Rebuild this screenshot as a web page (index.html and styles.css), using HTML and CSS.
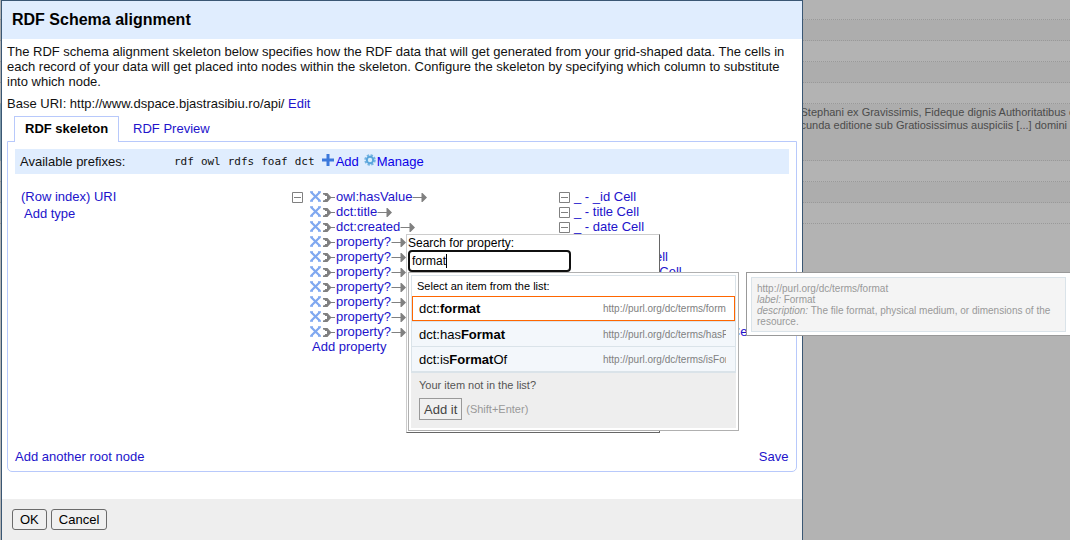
FILE: index.html
```html
<!DOCTYPE html>
<html lang="en">
<head>
<meta charset="utf-8">
<title>RDF Schema alignment</title>
<link rel="stylesheet" href="styles.css">
</head>
<body>
<svg class="sprite" aria-hidden="true">
  <symbol id="cross" viewBox="0 0 11 11"><path d="M1.2 1.2L9.8 9.8M9.8 1.2L1.2 9.8" stroke="#7fa8f0" stroke-width="2.2" fill="none"/><path d="M0 1h3M8 1H11M0 10h3M8 10H11" stroke="#7fa8f0" stroke-width="1.500"/></symbol>
  <symbol id="tail" viewBox="0 0 12 11"><path d="M0 1h4.500l3.500 4H12v1H8L4.500 10H0V8.500L2 8V7h2V4H2V3L0 2.500z" fill="#808080"/></symbol>
  <symbol id="head" viewBox="0 0 14 11"><path d="M0 5h9V1h1l4.500 4.500L10 10H9V6H0z" fill="#808080"/></symbol>
  <symbol id="minus" viewBox="0 0 11 11"><path d="M.5.5h10v10H.5zM2 5.500h7" fill="none" stroke="#808080"/></symbol>
</svg>

<div class="grid-view">
  <div class="record"></div><div class="record"></div><div class="record"></div><div class="record"></div><div class="record"></div>
  <div class="record record-tall">Stephani ex Gravissimis, Fideque dignis Authoritatibus collecta<br>cunda editione sub Gratiosissimus auspiciis [...] domini comitis</div>
  <div class="record"></div><div class="record"></div><div class="record"></div>
</div>

<div class="dialog" role="dialog" aria-labelledby="dialog-title">
  <h1 class="dialog-header" id="dialog-title">RDF Schema alignment</h1>
  <div class="dialog-body">
    <p class="intro">The RDF schema alignment skeleton below specifies how the RDF data that will get generated from your grid-shaped data. The cells in each record of your data will get placed into nodes within the skeleton. Configure the skeleton by specifying which column to substitute into which node.</p>
    <p class="base-uri">Base URI: http://www.dspace.bjastrasibiu.ro/api/ <a href="#">Edit</a></p>
    <nav class="tabs">
      <a class="tab tab-active" href="#">RDF skeleton</a>
      <a class="tab" href="#">RDF Preview</a>
    </nav>
    <section class="panel">
      <div class="prefixes">
        <span class="prefixes-label">Available prefixes:</span>
        <span class="prefix-list"><span>rdf</span><span>owl</span><span>rdfs</span><span>foaf</span><span>dct</span></span>
        <a class="action" href="#"><svg width="12" height="12" viewBox="0 0 12 12"><path d="M4.500 0h3v4.500H12v3H7.500V12h-3V7.500H0v-3h4.500z" fill="#3b78dc"/></svg>Add</a>
        <a class="action" href="#"><svg width="12" height="12" viewBox="0 0 12 12"><circle cx="6" cy="6" r="4.800" fill="none" stroke="#74b4e2" stroke-width="2" stroke-dasharray="2.300 1.470"/><circle cx="6" cy="6" r="3.200" fill="#d5edfb" stroke="#5aa5dc" stroke-width="2"/></svg>Manage</a>
      </div>
      <div class="skeleton">
        <div class="root-node"><a href="#">(Row index) URI</a><a class="add-type" href="#">Add type</a></div>
        <div class="properties">
          <svg class="toggle"><use href="#minus"/></svg>
          <div class="rows">
            <div class="row"><svg class="cross"><use href="#cross"/></svg><svg class="tail"><use href="#tail"/></svg><a href="#">owl:hasValue</a><svg class="head"><use href="#head"/></svg></div>
            <div class="row"><svg class="cross"><use href="#cross"/></svg><svg class="tail"><use href="#tail"/></svg><a href="#">dct:title</a><svg class="head"><use href="#head"/></svg></div>
            <div class="row"><svg class="cross"><use href="#cross"/></svg><svg class="tail"><use href="#tail"/></svg><a href="#">dct:created</a><svg class="head"><use href="#head"/></svg></div>
            <div class="row"><svg class="cross"><use href="#cross"/></svg><svg class="tail"><use href="#tail"/></svg><a href="#">property?</a><svg class="head"><use href="#head"/></svg></div>
            <div class="row"><svg class="cross"><use href="#cross"/></svg><svg class="tail"><use href="#tail"/></svg><a href="#">property?</a><svg class="head"><use href="#head"/></svg></div>
            <div class="row"><svg class="cross"><use href="#cross"/></svg><svg class="tail"><use href="#tail"/></svg><a href="#">property?</a><svg class="head"><use href="#head"/></svg></div>
            <div class="row"><svg class="cross"><use href="#cross"/></svg><svg class="tail"><use href="#tail"/></svg><a href="#">property?</a><svg class="head"><use href="#head"/></svg></div>
            <div class="row"><svg class="cross"><use href="#cross"/></svg><svg class="tail"><use href="#tail"/></svg><a href="#">property?</a><svg class="head"><use href="#head"/></svg></div>
            <div class="row"><svg class="cross"><use href="#cross"/></svg><svg class="tail"><use href="#tail"/></svg><a href="#">property?</a><svg class="head"><use href="#head"/></svg></div>
            <div class="row"><svg class="cross"><use href="#cross"/></svg><svg class="tail"><use href="#tail"/></svg><a href="#">property?</a><svg class="head"><use href="#head"/></svg></div>
            <div class="row add-property"><a href="#">Add property</a></div>
          </div>
        </div>
        <div class="cells">
          <div class="row"><svg class="toggle"><use href="#minus"/></svg><a href="#">_ - _id Cell</a></div>
          <div class="row"><svg class="toggle"><use href="#minus"/></svg><a href="#">_ - title Cell</a></div>
          <div class="row"><svg class="toggle"><use href="#minus"/></svg><a href="#">_ - date Cell</a></div>
          <div class="row"><svg class="toggle"><use href="#minus"/></svg><a href="#">_ - type Cell</a></div>
          <div class="row"><svg class="toggle"><use href="#minus"/></svg><a href="#">_ - identifier Cell</a></div>
          <div class="row"><svg class="toggle"><use href="#minus"/></svg><a href="#">_ - description Cell</a></div>
          <div class="row"><svg class="toggle"><use href="#minus"/></svg><a href="#">_ - format Cell</a></div>
          <div class="row"><svg class="toggle"><use href="#minus"/></svg><a href="#">_ - subject Cell</a></div>
          <div class="row"><svg class="toggle"><use href="#minus"/></svg><a href="#">_ - publisher Cell</a></div>
          <div class="row"><svg class="toggle"><use href="#minus"/></svg><a href="#">_ - bibliographicCitation_id Cell</a></div>
        </div>
      </div>
      <div class="panel-actions"><a href="#">Add another root node</a><a href="#">Save</a></div>
    </section>
  </div>
  <div class="dialog-footer"><button class="button" type="button">OK</button><button class="button" type="button">Cancel</button></div>

  <div class="search-menu">
    <label for="property-search">Search for property:</label>
    <input class="search-input" id="property-search" type="text" value="format">
    <span class="caret"></span>
  </div>
  <div class="suggest">
    <div class="suggest-box">
      <div class="suggest-title">Select an item from the list:</div>
      <div class="item item-selected"><span class="item-name">dct:<b>format</b></span><span class="item-uri">http://purl.org/dc/terms/format</span></div>
      <div class="item"><span class="item-name">dct:has<b>Format</b></span><span class="item-uri">http://purl.org/dc/terms/hasFormat</span></div>
      <div class="item"><span class="item-name">dct:is<b>Format</b>Of</span><span class="item-uri">http://purl.org/dc/terms/isFormatOf</span></div>
    </div>
    <div class="suggest-new">
      <div>Your item not in the list?</div>
      <div class="new-row"><button class="add-it" type="button">Add it</button><span class="shortcut">(Shift+Enter)</span></div>
    </div>
  </div>
  <div class="flyout">
    <div class="flyout-box">http://purl.org/dc/terms/format<br><i>label:</i> Format<br><i>description:</i> The file format, physical medium, or dimensions of the resource.</div>
  </div>
</div>
</body>
</html>
```

FILE: styles.css
```css
* { box-sizing: border-box; }
html, body { height: 100%; }
body {
  margin: 0;
  position: relative;
  overflow: hidden;
  background: #b3b3b3;
  color: #111;
  font: 13px/15px "Liberation Sans", Arial, sans-serif;
}
a { color: #2213cb; text-decoration: none; }
p { margin: 0; }
svg { display: block; flex: none; }
.sprite { position: absolute; width: 0; height: 0; }

/* data grid dimmed behind the dialog */
.record { height: 21px; border-bottom: 1px dotted #999; }
.record:first-child { height: 20px; }
.record:nth-child(even) { background: #adadad; }
.record-tall {
  height: 57px;
  padding: 2px 0 0 calc(75% - 3px);
  border-left: 1px solid #7d98a8;
  color: #4b4b4b;
  font-size: 11px;
  line-height: 13px;
  white-space: nowrap;
}

/* dialog */
.dialog {
  position: absolute;
  top: 0;
  left: 1px;
  width: calc(75% - 1px);
  min-height: 101%;
  display: flex;
  flex-direction: column;
  border: 1px solid #3a5774;
  background: #fff;
}
.dialog-header {
  margin: 0;
  padding: 9px 10px;
  background: #e0edfe;
  color: #000;
  font-size: 16px;
  line-height: 20px;
}
.dialog-body { padding: 5px 5px 27px; }
.intro { margin-bottom: 7px; }

.tabs { display: flex; gap: 3px; padding: 5px 7px 0; }
.tab { padding: 4px 10px 5px; border: 1px solid transparent; border-bottom: 0; }
.tab-active {
  position: relative;
  margin-bottom: -1px;
  border-color: #b8c9fb;
  background: #fff;
  color: #000;
  font-weight: bold;
}
.panel { padding: 7px; border: 1px solid #b8c9fb; border-radius: 0 0 5px 5px; }
.prefixes { display: flex; align-items: center; height: 25px; padding: 0 5px; background: #e0edfe; }
.prefixes-label { width: 154px; }
.prefix-list {
  display: flex;
  gap: 7px;
  margin-right: 7px;
  font: 11px/15px "DejaVu Sans Mono", monospace;
}
.action { display: flex; gap: 2px; margin-right: 5px; color: #0b00e6; }
.action + .action { gap: 1px; }

.skeleton {
  display: grid;
  grid-template-columns: 271px 267px 1fr;
  min-height: 260px;
  padding: 15px 0 0 6px;
}
.root-node { display: flex; flex-direction: column; gap: 2px; }
.add-type { padding-left: 3px; }
.properties { display: flex; gap: 7px; }
.properties > .toggle { margin-top: 3px; }
.row { display: flex; align-items: center; height: 15px; white-space: nowrap; }
.toggle { width: 11px; height: 11px; margin-top: 2px; }
.cross { width: 11px; height: 11px; margin-right: 2px; }
.tail { width: 12px; height: 11px; margin: 2px 1px 0 0; }
.head { width: 15px; height: 11px; margin-top: 2px; }
.add-property { padding-left: 2px; }
.cells .row { gap: 4px; }
.panel-actions { display: flex; justify-content: space-between; padding-top: 15px; }

.dialog-footer { flex: 1; display: flex; align-items: flex-start; gap: 4px; padding: 10px; background: #eee; }
.button {
  height: 21px;
  padding: 0 7px;
  border: 1px solid #6b6b6b;
  border-radius: 3px;
  background: #f0f0f0;
  color: #000;
  font: inherit;
}

/* property search */
.search-menu {
  position: absolute;
  left: 404px;
  top: 233px;
  width: 254px;
  height: 199px;
  padding: 1px;
  border: 1px solid;
  border-color: #ccc #666 #666 #ccc;
  background: #fff;
  color: #000;
  font-size: 12px;
}
.search-menu label { display: block; line-height: 14px; }
.search-input {
  display: block;
  width: 163px;
  height: 22px;
  padding: 0 2px;
  border: 2px solid #101010;
  border-radius: 4px;
  outline: 0;
  background: #fff;
  font: inherit;
}
.caret { position: absolute; left: 39px; top: 19px; width: 1px; height: 14px; background: #000; }

.suggest {
  position: absolute;
  left: 406px;
  top: 271px;
  width: 331px;
  padding: 2px;
  border: 1px solid #b0b0b0;
  background: #fff;
}
.suggest-box { border: 1px solid #dae3e9; border-bottom-width: 2px; }
.suggest-title { padding: 3px 5px 2px; color: #000; font-size: 11px; }
.item {
  display: flex;
  align-items: center;
  justify-content: space-between;
  height: 25px;
  padding: 0 9px 0 7px;
  border-top: 1px solid #dae3e9;
  background: #f3f7fb;
  color: #000;
}
.item-selected { border: 1px solid #f60; padding: 0 8px 0 6px; background: #fff; }
.item-uri { width: 123px; overflow: hidden; color: #808080; font-size: 10px; white-space: nowrap; }
.suggest-new { padding: 5px 8px 8px; background: #eee; color: #555; font-size: 11px; }
.new-row { display: flex; align-items: center; gap: 4px; margin-top: 5px; }
.add-it { height: 22px; padding: 0 4px; border: 1px solid #999; background: #f0f0f0; color: #444; font: 13px "Liberation Sans", Arial, sans-serif; }
.shortcut { color: #999; }

.flyout {
  position: absolute;
  left: 744px;
  top: 271px;
  width: 330px;
  padding: 4px 4px 3px;
  border: 1px solid #999;
  background: #fff;
}
.flyout-box {
  width: 315px;
  padding: 5px 5px 4px;
  border: 1px solid #dae3e9;
  background: #f4f4f4;
  color: #999;
  font-size: 10px;
  line-height: 11px;
}
```
